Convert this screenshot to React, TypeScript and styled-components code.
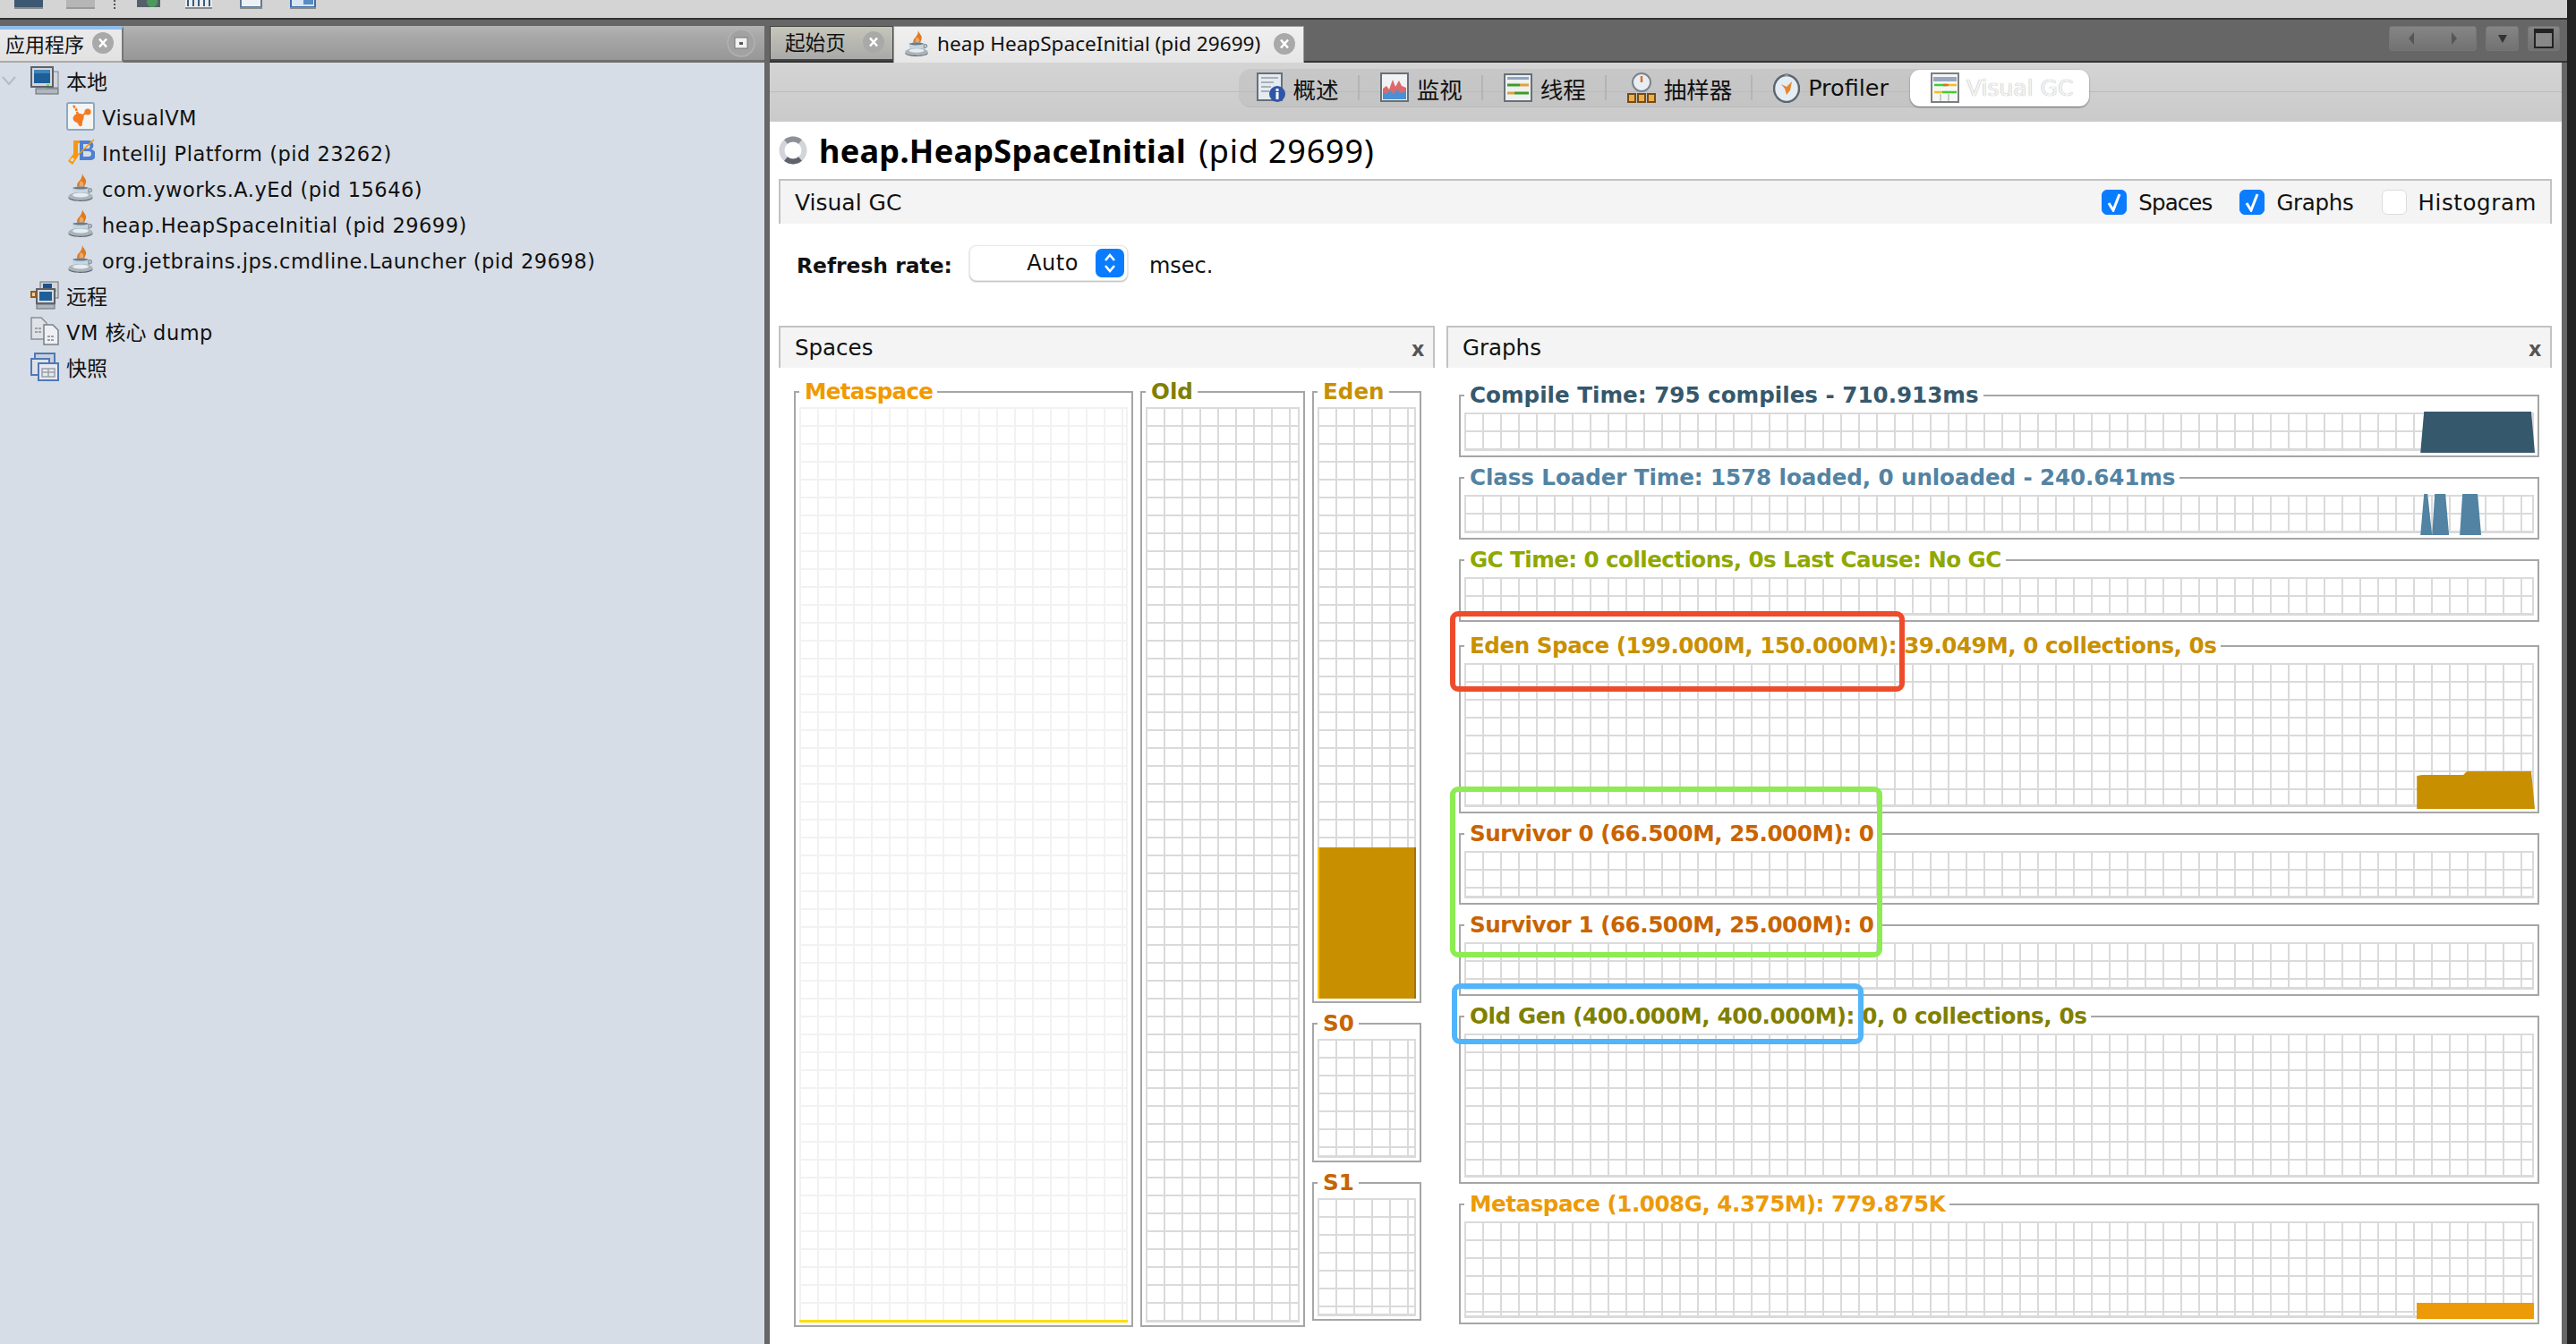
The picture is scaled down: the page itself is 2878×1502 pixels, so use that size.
import React from "react";
import styled, { createGlobalStyle } from "styled-components";

const SANS = `"DejaVu Sans", "Noto Sans CJK SC", sans-serif`;
const NOTO = `"Noto Sans", "Noto Sans CJK SC", sans-serif`;

const Global = createGlobalStyle`
  html, body { margin: 0; padding: 0; background: #222; }
  * { box-sizing: border-box; }
  body { font-family: ${SANS}; color: #111; overflow: hidden; }
`;

const Frame = styled.div`
  position: relative;
  width: 2878px;
  height: 1502px;
  overflow: hidden;
  background: #222;
`;
const Windowed = styled.div`
  width: 2868px;
  height: 1502px;
  display: flex;
  flex-direction: column;
  background: #666;
`;
const TopBar = styled.div`
  height: 20px;
  flex: none;
  background: #d4d4d4;
  display: flex;
  align-items: flex-start;
  overflow: hidden;
`;
const TopIcon = styled.svg<{ $ml: number }>`
  display: block;
  height: 10px;
  margin-left: ${(p) => p.$ml}px;
`;
const Main = styled.div`
  flex: 1;
  min-height: 0;
  display: flex;
  border-top: 2px solid #333;
  background: #666;
`;
const LeftPane = styled.aside`
  width: 854px;
  flex: none;
  margin-right: 6px;
  display: flex;
  flex-direction: column;
  padding-top: 7px;
`;
const LeftHead = styled.div`
  height: 41px;
  flex: none;
  display: flex;
  border-bottom: 3px solid #6e6e6e;
  background: linear-gradient(#b4b4b4, #a8a8a8 30%, #979797);
`;
const LeftTab = styled.div`
  width: 138px;
  height: 41px;
  flex: none;
  display: flex;
  align-items: center;
  padding: 0 0 5px 6px;
  gap: 9px;
  font-family: ${NOTO};
  font-size: 22px;
  background: linear-gradient(#eaeaea, #e2e2e2);
  border-top: 4px solid #8fbce8;
  border-right: 2px solid #777;
  border-bottom: 2px solid #aaa;
  white-space: nowrap;
  svg { flex: none; }
`;
const LeftHeadAction = styled.svg`
  margin-left: auto;
  margin-right: 10px;
  align-self: center;
  flex: none;
`;
const Tree = styled.div`
  flex: 1;
  background: #d6dde6;
`;
const TreeRow = styled.div<{ $indent: number }>`
  height: 40px;
  display: flex;
  align-items: center;
  padding-left: ${(p) => p.$indent}px;
  gap: 8px;
  font-size: 22.5px;
  letter-spacing: 0.5px;
  color: #111;
  white-space: nowrap;
  svg { flex: none; }
`;
const TreeText = styled.span`
  padding-top: 3px;
`;
const Han = styled.span`
  font-size: 23px;
  letter-spacing: 0;
`;
const TreeChevron = styled.svg`
  margin-right: 8px;
`;

const RightPane = styled.section`
  flex: 1;
  min-width: 0;
  display: flex;
  flex-direction: column;
  padding-top: 7px;
`;
const TabStrip = styled.div`
  height: 41px;
  flex: none;
  display: flex;
  align-items: flex-start;
  padding-right: 8px;
  border-bottom: 2px solid #333;
`;
const DocTab = styled.div<{ $active?: boolean; $w: number }>`
  width: ${(p) => p.$w}px;
  height: ${(p) => (p.$active ? 41 : 39)}px;
  flex: none;
  display: flex;
  align-items: center;
  font-family: ${NOTO};
  font-size: 22.6px;
  padding: 0 9px 3px ${(p) => (p.$active ? 10 : 16)}px;
  gap: 8px;
  white-space: nowrap;
  position: relative;
  z-index: 1;
  background: ${(p) => (p.$active ? "linear-gradient(#f0f0f0,#e6e6e6)" : "linear-gradient(#c6c6ba,#a9a9a9)")};
  border: 1px solid ${(p) => (p.$active ? "#9a9a9a" : "#444")};
  border-bottom: ${(p) => (p.$active ? "none" : "2px solid #444")};
  svg { flex: none; }
`;
const TabLabel = styled.span`
  flex: 1;
`;
const NavGroup = styled.div`
  margin-left: auto;
  display: flex;
  gap: 10px;
`;
const NavBtn = styled.div<{ $w: number }>`
  width: ${(p) => p.$w}px;
  height: 28px;
  display: flex;
  border: 1px solid #767676;
  border-radius: 3px;
  background: linear-gradient(#858585, #727272);
  align-items: center;
  justify-content: space-around;
`;
const Tri = styled.span<{ $dir: "l" | "r" | "d" }>`
  width: 0;
  height: 0;
  ${(p) =>
    p.$dir === "l"
      ? "border-top:7px solid transparent;border-bottom:7px solid transparent;border-right:6px solid #565656;"
      : p.$dir === "r"
      ? "border-top:7px solid transparent;border-bottom:7px solid transparent;border-left:6px solid #565656;"
      : "border-left:5px solid transparent;border-right:5px solid transparent;border-top:9px solid #333;"}
`;
const MaxGlyph = styled.span`
  width: 22px;
  height: 22px;
  background: #888;
  border: 2px solid #222;
  border-top-width: 5px;
`;
const WhiteCol = styled.div`
  flex: 1;
  min-height: 0;
  margin-right: 6px;
  display: flex;
  flex-direction: column;
  background: #fff;
`;
const SubBar = styled.div`
  height: 66px;
  flex: none;
  display: flex;
  justify-content: center;
  align-items: flex-start;
  padding-top: 7px;
  position: relative;
  background: linear-gradient(#d4d4d4, #cacaca);
  &::before {
    content: "";
    position: absolute;
    left: 0;
    right: 0;
    top: 32px;
    height: 1px;
    background: #bdbdbd;
  }
`;
const Pill = styled.div`
  position: relative;
  height: 43px;
  margin-right: 4px;
  display: flex;
  align-items: center;
  padding-left: 20px;
  border-radius: 14px;
  background: rgba(190, 190, 190, 0.55);
  border-bottom: 1px solid #b8b8b8;
`;
const PillItem = styled.div`
  display: flex;
  align-items: center;
  gap: 9px;
  font-size: 25.5px;
  color: #111;
  white-space: nowrap;
  padding-right: 21px;
  svg { flex: none; }
`;
const PillSep = styled.span`
  width: 2px;
  height: 28px;
  margin-right: 23px;
  background: #b4b4b4;
`;
const PillActive = styled.div`
  display: flex;
  align-items: center;
  gap: 8px;
  margin-left: 3px;
  padding: 0 18px 0 23px;
  height: 41px;
  border-radius: 11px;
  background: #fff;
  box-shadow: 0 1px 2px rgba(0, 0, 0, 0.45);
  font-size: 25px;
  color: #f4f4f4;
  text-shadow: 0 0 1px #8a8a8a;
  white-space: nowrap;
`;
const Content = styled.div`
  flex: 1;
  min-height: 0;
  padding: 0 11px 0 10px;
  display: flex;
  flex-direction: column;
`;
const TitleRow = styled.div`
  height: 64px;
  flex: none;
  display: flex;
  align-items: center;
  gap: 13px;
`;
const Title = styled.h1`
  margin: 0;
  font-family: ${NOTO};
  font-size: 36px;
  font-weight: 700;
  letter-spacing: 0.3px;
  color: #000;
  white-space: nowrap;
`;
const TitleLight = styled.span`
  font-weight: 400;
  letter-spacing: 0.8px;
  margin-left: 4px;
`;
const SectionBar = styled.div`
  height: 50px;
  flex: none;
  display: flex;
  align-items: center;
  padding: 0 15px 0 16px;
  font-size: 25px;
  background: #f4f4f4;
  border: 2px solid #c2c2c2;
  border-bottom: none;
`;
const Checks = styled.div`
  margin-left: auto;
  display: flex;
  align-items: center;
`;
const CheckLabel = styled.label<{ $ls: number }>`
  display: flex;
  align-items: center;
  gap: 13px;
  margin-left: 31px;
  font-size: 24.5px;
  letter-spacing: ${(p) => p.$ls}px;
  white-space: nowrap;
`;
const CheckBox = styled.span<{ $on: boolean }>`
  width: 28px;
  height: 28px;
  border-radius: 6px;
  display: flex;
  align-items: center;
  justify-content: center;
  background: ${(p) => (p.$on ? "#0a7cff" : "#fff")};
  border: 1px solid ${(p) => (p.$on ? "#0a7cff" : "#dcdcdc")};
`;
const RefreshRow = styled.div`
  height: 114px;
  flex: none;
  display: flex;
  align-items: flex-start;
  padding: 24px 0 0 20px;
`;
const RefreshLabel = styled.span`
  font-size: 23.4px;
  font-weight: 700;
  line-height: 46px;
  margin-right: 19px;
`;
const Select = styled.div`
  width: 177px;
  height: 40px;
  display: flex;
  align-items: center;
  justify-content: flex-end;
  gap: 19px;
  padding-right: 3px;
  border-radius: 8px;
  background: #fff;
  border: 1px solid #e8e8e8;
  box-shadow: 0 1px 2px rgba(0, 0, 0, 0.3);
  font-size: 24px;
  letter-spacing: 0.5px;
`;
const Stepper = styled.span`
  width: 32px;
  height: 32px;
  border-radius: 7px;
  background: #0a7cff;
  display: flex;
  align-items: center;
  justify-content: center;
`;
const Unit = styled.span`
  font-size: 24px;
  line-height: 46px;
  margin-left: 24px;
`;
const Panels = styled.div`
  flex: 1;
  min-height: 0;
  display: flex;
  gap: 13px;
`;
const Panel = styled.div<{ $w: number }>`
  width: ${(p) => p.$w}px;
  flex: none;
  display: flex;
  flex-direction: column;
`;
const PanelHead = styled.div`
  height: 47px;
  flex: none;
  display: flex;
  align-items: center;
  justify-content: space-between;
  padding: 0 10px 0 16px;
  font-size: 24.5px;
  background: #f4f4f4;
  border: 2px solid #c2c2c2;
  border-bottom: none;
`;
const CloseX = styled.span`
  font-family: ${NOTO};
  font-size: 24px;
  font-weight: 700;
  color: #555;
`;
const SpacesBody = styled.div`
  display: flex;
  gap: 8px;
  padding: 12px 0 0 17px;
`;
const SpaceStack = styled.div`
  display: flex;
  flex-direction: column;
  gap: 8px;
  width: 122px;
`;
const GraphsBody = styled.div`
  display: flex;
  flex-direction: column;
  padding: 16px 0 0 14px;
  width: 1221px;
`;
const Box = styled.fieldset<{ $w?: number; $gap?: number; $pad?: number }>`
  margin: ${(p) => p.$gap ?? 0}px 0 0 0;
  min-width: 0;
  width: ${(p) => (p.$w ? `${p.$w}px` : "100%")};
  flex: none;
  border: 2px solid #a6a6a6;
  padding: ${(p) => (p.$pad === 3 ? "2px 4px 3px" : "4px 4px 5px")};
`;
const Legend = styled.legend<{ $c: string; $ls?: number }>`
  padding: 0 5px 0 6px;
  height: 30px;
  line-height: 30px;
  font-size: 24.6px;
  font-weight: 700;
  letter-spacing: ${(p) => p.$ls ?? 0}px;
  color: ${(p) => p.$c};
  white-space: nowrap;
`;
const ChartGrid = styled.div<{ $h: number; $soft?: boolean }>`
  position: relative;
  height: ${(p) => p.$h}px;
  ${(p) => {
    const c = p.$soft ? "#f2f2f2" : "#dadada";
    return `
      background-color: #fff;
      background-image: linear-gradient(${c} 2px, transparent 2px), linear-gradient(90deg, ${c} 2px, transparent 2px);
      background-size: 20px 20px;
      border-right: 2px solid ${c};
      border-bottom: 3px solid ${c};
    `;
  }}
`;
const Plot = styled.svg`
  position: absolute;
  left: 0;
  bottom: -5px;
  width: 100%;
  display: block;
  overflow: visible;
`;
const Level = styled.div<{ $c: string; $h: number; $left?: number; $bottom?: number }>`
  position: absolute;
  left: ${(p) => p.$left ?? 0}px;
  right: -2px;
  bottom: ${(p) => p.$bottom ?? -3}px;
  height: ${(p) => p.$h}px;
  background: ${(p) => p.$c};
`;
const EdenLevel = styled(Level)`
  border-left: 2px solid #ffc400;
  border-right: 2px solid #a07400;
`;
const Callout = styled.div<{ $c: string; $x: number; $y: number; $w: number; $h: number }>`
  position: absolute;
  left: ${(p) => p.$x}px;
  top: ${(p) => p.$y}px;
  width: ${(p) => p.$w}px;
  height: ${(p) => p.$h}px;
  border: 6px solid ${(p) => p.$c};
  border-radius: 9px;
  pointer-events: none;
`;

const CloseDot = () => (
  <svg width="24" height="24" viewBox="0 0 24 24">
    <circle cx="12" cy="12" r="12" fill="#a9a9a9" />
    <path d="M8 7.5l8 9M16 7.5l-8 9" stroke="#fff" strokeWidth="2.6" />
  </svg>
);
const ComputerIcon = () => (
  <svg width="32" height="32" viewBox="0 0 32 32">
    <rect x="19" y="6" width="12" height="18" fill="#d2d6dc" stroke="#7c8188" />
    <rect x="1" y="1" width="24" height="22" fill="#d4d8de" stroke="#5c6268" strokeWidth="2" />
    <rect x="4" y="4" width="18" height="15" fill="#1d5f99" />
    <rect x="4" y="4" width="18" height="4" fill="#3f84b8" />
    <rect x="18" y="20" width="3" height="2" fill="#6fe04c" />
    <rect x="6" y="25" width="25" height="6" fill="#b0b6bd" stroke="#666c72" />
  </svg>
);
const VisualVMIcon = () => (
  <svg width="32" height="32" viewBox="0 0 32 32">
    <rect x="1" y="1" width="30" height="30" rx="2" fill="#f3f4f4" stroke="#8ea8bf" strokeWidth="2" />
    <path d="M9 15c3-3 8-3 10 0 2 3-1 5-1 8 0 3-1 5-3 4-2-1-1-3-3-4-4-1-6-5-3-8z" fill="#f47a20" />
    <circle cx="24" cy="11" r="3.6" fill="#f47a20" />
    <path d="M16 17l7-6" stroke="#f47a20" strokeWidth="2" />
    <path d="M8 4l3 4 2 6" fill="none" stroke="#f47a20" strokeWidth="2.5" strokeDasharray="3 1" />
  </svg>
);
const IntellijIcon = () => (
  <svg width="32" height="32" viewBox="0 0 32 32">
    <path
      fillRule="evenodd"
      d="M15 3h10a5.5 5.5 0 0 1 3 10 6 6 0 0 1-2 12H15zM19 7v5h5a2.5 2.5 0 0 0 0-5zM19 15v6h6a3 3 0 0 0 0-6z"
      fill="#4f7fd0"
    />
    <path d="M8 3h7v3h-2v15l-6 9-5-4 6-8V6H8z" fill="#f6980f" />
    <path d="M4 25l3 2 2-3-2-2z" fill="#d6dde6" />
    <path d="M10 22L31 2" stroke="#f6980f" strokeWidth="1.6" />
  </svg>
);
const JavaIcon = ({ size = 32 }: { size?: number }) => (
  <svg width={size} height={size} viewBox="0 0 32 32">
    <path d="M18 0c1 4 5 6 4 10-1 3-2 5-3 7h-5c-3-3-2-6 0-8 2-2 4-5 4-9z" fill="#dd7a22" />
    <path d="M16 8c-1 2-2 4-1 7h3c2-2 2-4 0-6z" fill="#f3a65c" />
    <path d="M7 16c4-2 14-2 18 0l-1 7c-1 3-15 3-16 0z" fill="#c4d6e2" />
    <path d="M7 16c4 2 14 2 18 0-4-2-14-2-18 0z" fill="#6e7a84" />
    <path d="M25 17c4-1 5 3 0 4z" fill="none" stroke="#8c98a2" strokeWidth="1.5" />
    <ellipse cx="16" cy="25.5" rx="13.5" ry="4.5" fill="#aab4bc" />
    <ellipse cx="16" cy="24" rx="9" ry="2.4" fill="#e6ecf0" />
    <path d="M2.5 26c2 5 25 5 27 0v1.5c-2 4.500-25 4.500-27 0z" fill="#5c6368" />
  </svg>
);
const RemoteIcon = () => (
  <svg width="32" height="32" viewBox="0 0 32 32">
    <rect x="11" y="1" width="20" height="18" fill="#d0d4da" stroke="#6a7076" />
    <rect x="14" y="3" width="10" height="6" fill="#1d4f8f" />
    <rect x="26" y="9" width="3" height="3" fill="#6fe04c" />
    <rect x="7" y="9" width="20" height="16" fill="#d4d8de" stroke="#5c6268" strokeWidth="2" />
    <rect x="10" y="12" width="14" height="10" fill="#1d5f99" />
    <rect x="7" y="26" width="20" height="5" fill="#b0b6bd" stroke="#666c72" />
    <rect x="1" y="12" width="5" height="6" fill="#e0d0b8" stroke="#9a5b10" strokeWidth="2" />
  </svg>
);
const DumpIcon = () => (
  <svg width="32" height="32" viewBox="0 0 32 32">
    <path d="M1 1h11l6 6v18H1z" fill="#dfe3e8" stroke="#8b9096" strokeWidth="1.5" />
    <path d="M15 9h10l6 6v16H15z" fill="#eef0f3" stroke="#7b8086" strokeWidth="1.5" />
    <path d="M5 13h8M5 17h8M19 22h8M19 26h8" stroke="#9ca1a8" strokeWidth="2" strokeDasharray="3 1" />
  </svg>
);
const SnapshotIcon = () => (
  <svg width="32" height="32" viewBox="0 0 32 32">
    <rect x="5" y="1" width="22" height="20" fill="#c8d0da" stroke="#4f78b8" strokeWidth="2" />
    <rect x="1" y="7" width="20" height="18" fill="#dde2e8" stroke="#4f78b8" strokeWidth="2" />
    <rect x="9" y="12" width="22" height="19" fill="#e6e9ee" stroke="#4f78b8" strokeWidth="2" />
    <path d="M13 18h14v9H13zM20 18v9M13 22h14" fill="none" stroke="#9aa0a8" strokeWidth="1.5" />
  </svg>
);
const OverviewIcon = () => (
  <svg width="32" height="34" viewBox="0 0 32 34">
    <rect x="1" y="1" width="27" height="30" fill="#e6ebf1" stroke="#66707a" strokeWidth="2" />
    <path d="M5 6h19M5 11h14M5 16h11M5 21h9" stroke="#a8b0ba" strokeWidth="2" />
    <circle cx="23" cy="24" r="9" fill="#2f55a8" />
    <rect x="21.5" y="22" width="3" height="8" fill="#fff" />
    <rect x="21.5" y="18" width="3" height="3" fill="#fff" />
  </svg>
);
const MonitorIcon = () => (
  <svg width="32" height="34" viewBox="0 0 32 34">
    <rect x="1" y="1" width="30" height="31" fill="#f0f2f4" stroke="#66707a" strokeWidth="2" />
    <path d="M3 30V18l4-3 3 4 4-11 3 8 4-7 3 6 5 2v13z" fill="#dc6a6a" />
    <path d="M3 30v-8l4 2 4-4 4 4 4-5 4 4 6-2v9z" fill="#4a90d4" />
  </svg>
);
const ThreadsIcon = () => (
  <svg width="32" height="32" viewBox="0 0 32 32">
    <rect x="1" y="1" width="30" height="30" fill="#eef1ee" stroke="#66707a" strokeWidth="2" />
    <rect x="4" y="4" width="24" height="3" fill="#8ea6c4" />
    <path d="M4 13h14" stroke="#3f9a2c" strokeWidth="3" />
    <path d="M18 13h10" stroke="#e0a040" strokeWidth="3" />
    <path d="M4 22h8" stroke="#e0a040" strokeWidth="3" />
    <path d="M12 22h16" stroke="#3f9a2c" strokeWidth="3" />
  </svg>
);
const SamplerIcon = () => (
  <svg width="32" height="34" viewBox="0 0 32 34">
    <circle cx="16" cy="11" r="10" fill="#e8eef4" stroke="#7b848c" strokeWidth="2" />
    <path d="M16 4v7" stroke="#d8702a" strokeWidth="2.5" />
    <path d="M1 24h8v9H1zM12 24h8v9h-8zM23 24h8v9h-8z" fill="#eab04a" stroke="#7a4a10" strokeWidth="2" />
  </svg>
);
const ProfilerIcon = () => (
  <svg width="30" height="34" viewBox="0 0 30 34">
    <ellipse cx="15" cy="18" rx="14" ry="15" fill="#e4ecf4" stroke="#5d666e" strokeWidth="2.5" />
    <path d="M9 13l6 3 6-6-2 10-4 5-2-7z" fill="#e8862c" />
    <rect x="13" y="1" width="4" height="3" fill="#8a9098" />
  </svg>
);
const VisualGCIcon = () => (
  <svg width="32" height="34" viewBox="0 0 32 34">
    <rect x="1" y="1" width="30" height="32" fill="#f6f6f6" stroke="#7a7f85" strokeWidth="2" />
    <rect x="3" y="5" width="26" height="5" fill="#9aa8c0" />
    <path d="M4 14h14" stroke="#3fcf2a" strokeWidth="2.5" />
    <path d="M14 14h6" stroke="#e0702a" strokeWidth="2.5" />
    <path d="M20 14h9" stroke="#f0c020" strokeWidth="2.5" />
    <path d="M4 22h9" stroke="#f0c020" strokeWidth="2.5" />
    <path d="M13 22h16" stroke="#3fcf2a" strokeWidth="2.5" />
    <path d="M11 24v8M20 24v8" stroke="#ccc" strokeWidth="2" />
  </svg>
);
const Spinner = () => (
  <svg width="32" height="32" viewBox="0 0 32 32">
    <circle cx="16" cy="16" r="12.5" fill="none" stroke="#d2d4da" strokeWidth="6" />
    <path d="M8 6.500A12.5 12.500 0 0 1 24 6.500" fill="none" stroke="#8d9098" strokeWidth="6" />
    <path d="M24 25.500A12.5 12.500 0 0 1 8 25.500" fill="none" stroke="#5f626a" strokeWidth="6" />
  </svg>
);
const Tick = () => (
  <svg width="18" height="22" viewBox="0 0 18 22">
    <path d="M3 12l5 8 7-18" fill="none" stroke="#fff" strokeWidth="3" />
  </svg>
);
const StepGlyph = () => (
  <svg width="16" height="26" viewBox="0 0 16 26">
    <path d="M3 10l5-6 5 6M3 16l5 6 5-6" fill="none" stroke="#fff" strokeWidth="2.5" />
  </svg>
);

const Labelled = ({ icon, text }: { icon: React.ReactNode; text: string }) => (
  <PillItem>
    {icon}
    {text}
  </PillItem>
);

interface GraphSpec {
  label: string;
  color: string;
  h: number;
  gap: number;
  ls?: number;
  plot?: React.ReactNode;
}

const COMPILE_PLOT = (
  <Plot height="46" viewBox="0 0 1195 46" preserveAspectRatio="none">
    <path d="M1070 46L1074 0H1194L1198 46z" fill="#35586c" />
  </Plot>
);
const LOADER_PLOT = (
  <Plot height="46" viewBox="0 0 1195 46" preserveAspectRatio="none">
    <path d="M1070 46L1074 0H1078L1083 46zM1083 46L1086 0H1098L1102 46zM1114 46L1117 0H1134L1138 46z" fill="#5383a3" />
  </Plot>
);
const EDEN_PLOT = (
  <Plot height="42" viewBox="0 0 1195 42" preserveAspectRatio="none">
    <path d="M1066 42V5L1072 4H1118L1122 0H1194L1198 42z" fill="#c89000" />
  </Plot>
);

const GRAPHS: GraphSpec[] = [
  { label: "Compile Time: 795 compiles - 710.913ms", color: "#35586c", h: 43, gap: 0, plot: COMPILE_PLOT },
  { label: "Class Loader Time: 1578 loaded, 0 unloaded - 240.641ms", color: "#5383a3", h: 43, gap: 8, ls: -0.1, plot: LOADER_PLOT },
  { label: "GC Time: 0 collections, 0s Last Cause: No GC", color: "#8fa800", h: 43, gap: 8, ls: -0.57 },
  { label: "Eden Space (199.000M, 150.000M): 39.049M, 0 collections, 0s", color: "#c89000", h: 161, gap: 12, ls: -0.47, plot: EDEN_PLOT },
  { label: "Survivor 0 (66.500M, 25.000M): 0", color: "#c86400", h: 53, gap: 8, ls: -0.45 },
  { label: "Survivor 1 (66.500M, 25.000M): 0", color: "#c86400", h: 53, gap: 8, ls: -0.45 },
  { label: "Old Gen (400.000M, 400.000M): 0, 0 collections, 0s", color: "#808000", h: 161, gap: 8, ls: -0.4 },
  { label: "Metaspace (1.008G, 4.375M): 779.875K", color: "#ec9a08", h: 108, gap: 8, ls: -0.47, plot: <Level $c="#ec9a08" $h={18} $left={1064} $bottom={-4} /> },
];

export default function App() {
  return (
    <Frame>
      <Global />
      <Windowed>
        <TopBar>
          <TopIcon $ml={16} width="32" viewBox="0 0 32 10">
            <rect width="32" height="8" fill="#3d5872" />
            <rect y="8" width="32" height="2" fill="#8a8a8a" />
          </TopIcon>
          <TopIcon $ml={26} width="32" viewBox="0 0 32 10">
            <rect width="32" height="8" fill="#b6b6b6" />
            <rect y="8" width="32" height="2" fill="#9a9a9a" />
          </TopIcon>
          <TopIcon $ml={21} width="2" viewBox="0 0 2 10">
            <path d="M1 0v10" stroke="#555" strokeWidth="2" strokeDasharray="2 2" />
          </TopIcon>
          <TopIcon $ml={24} width="26" viewBox="0 0 26 10">
            <rect width="26" height="8" fill="#55606a" />
            <circle cx="17" cy="2" r="6" fill="#4c9a5a" />
          </TopIcon>
          <TopIcon $ml={28} width="30" viewBox="0 0 30 10">
            <rect width="30" height="8" fill="#e8ecf0" />
            <path d="M3 0v7M9 0v7M15 0v7M21 0v7M27 0v7" stroke="#3b5a7a" strokeWidth="2" />
            <rect y="8" width="30" height="2" fill="#8a8a8a" />
          </TopIcon>
          <TopIcon $ml={31} width="25" viewBox="0 0 25 10">
            <rect x="1" y="-3" width="23" height="11" fill="#eef1f4" stroke="#5d7a96" strokeWidth="2" />
            <rect y="8" width="25" height="2" fill="#8a8a8a" />
          </TopIcon>
          <TopIcon $ml={31} width="29" viewBox="0 0 29 10">
            <rect x="1" y="-3" width="27" height="11" fill="#d8e6f4" stroke="#3f6ea8" strokeWidth="2" />
            <rect x="15" y="-1" width="11" height="6" fill="#5a8cc4" />
            <rect y="8" width="29" height="2" fill="#8a8a8a" />
          </TopIcon>
        </TopBar>
        <Main>
          <LeftPane>
            <LeftHead>
              <LeftTab>
                应用程序
                <CloseDot />
              </LeftTab>
              <LeftHeadAction width="32" height="32" viewBox="0 0 32 32">
                <circle cx="16" cy="16" r="15" fill="#a2a2a2" stroke="#b2b2b2" strokeWidth="1.5" />
                <rect x="9" y="10" width="14" height="12" fill="#f0f0f0" stroke="#777" />
                <rect x="14" y="15" width="4" height="3" fill="#555" />
              </LeftHeadAction>
            </LeftHead>
            <Tree>
              <TreeRow $indent={2}>
                <TreeChevron width="16" height="12" viewBox="0 0 16 12">
                  <path d="M1 2l7 8 7-8" fill="none" stroke="#b4bcc6" strokeWidth="2" />
                </TreeChevron>
                <ComputerIcon />
                <Han>本地</Han>
              </TreeRow>
              <TreeRow $indent={74}>
                <VisualVMIcon />
                <TreeText>VisualVM</TreeText>
              </TreeRow>
              <TreeRow $indent={74}>
                <IntellijIcon />
                <TreeText>IntelliJ Platform (pid 23262)</TreeText>
              </TreeRow>
              <TreeRow $indent={74}>
                <JavaIcon />
                <TreeText>com.yworks.A.yEd (pid 15646)</TreeText>
              </TreeRow>
              <TreeRow $indent={74}>
                <JavaIcon />
                <TreeText>heap.HeapSpaceInitial (pid 29699)</TreeText>
              </TreeRow>
              <TreeRow $indent={74}>
                <JavaIcon />
                <TreeText>org.jetbrains.jps.cmdline.Launcher (pid 29698)</TreeText>
              </TreeRow>
              <TreeRow $indent={34}>
                <RemoteIcon />
                <Han>远程</Han>
              </TreeRow>
              <TreeRow $indent={34}>
                <DumpIcon />
                <span>
                  VM <Han>核心</Han> dump
                </span>
              </TreeRow>
              <TreeRow $indent={34}>
                <SnapshotIcon />
                <Han>快照</Han>
              </TreeRow>
            </Tree>
          </LeftPane>
          <RightPane>
            <TabStrip>
              <DocTab $w={138}>
                <TabLabel>起始页</TabLabel>
                <CloseDot />
              </DocTab>
              <DocTab $active $w={459}>
                <JavaIcon size={30} />
                <TabLabel>heap HeapSpaceInitial (pid 29699)</TabLabel>
                <CloseDot />
              </DocTab>
              <NavGroup>
                <NavBtn $w={98}>
                  <Tri $dir="l" />
                  <Tri $dir="r" />
                </NavBtn>
                <NavBtn $w={37}>
                  <Tri $dir="d" />
                </NavBtn>
                <NavBtn $w={36}>
                  <MaxGlyph />
                </NavBtn>
              </NavGroup>
            </TabStrip>
            <WhiteCol>
              <SubBar>
                <Pill>
                  <Labelled icon={<OverviewIcon />} text="概述" />
                  <PillSep />
                  <Labelled icon={<MonitorIcon />} text="监视" />
                  <PillSep />
                  <Labelled icon={<ThreadsIcon />} text="线程" />
                  <PillSep />
                  <Labelled icon={<SamplerIcon />} text="抽样器" />
                  <PillSep />
                  <Labelled icon={<ProfilerIcon />} text="Profiler" />
                  <PillActive>
                    <VisualGCIcon />
                    Visual GC
                  </PillActive>
                </Pill>
              </SubBar>
              <Content>
                <TitleRow>
                  <Spinner />
                  <Title>
                    heap.HeapSpaceInitial<TitleLight> (pid 29699)</TitleLight>
                  </Title>
                </TitleRow>
                <SectionBar>
                  Visual GC
                  <Checks>
                    <CheckLabel $ls={-0.9}>
                      <CheckBox $on>
                        <Tick />
                      </CheckBox>
                      Spaces
                    </CheckLabel>
                    <CheckLabel $ls={-0.3}>
                      <CheckBox $on>
                        <Tick />
                      </CheckBox>
                      Graphs
                    </CheckLabel>
                    <CheckLabel $ls={0.6}>
                      <CheckBox $on={false} />
                      Histogram
                    </CheckLabel>
                  </Checks>
                </SectionBar>
                <RefreshRow>
                  <RefreshLabel>Refresh rate:</RefreshLabel>
                  <Select>
                    Auto
                    <Stepper>
                      <StepGlyph />
                    </Stepper>
                  </Select>
                  <Unit>msec.</Unit>
                </RefreshRow>
                <Panels>
                  <Panel $w={733}>
                    <PanelHead>
                      Spaces
                      <CloseX>x</CloseX>
                    </PanelHead>
                    <SpacesBody>
                      <Box $w={379} $pad={3}>
                        <Legend $c="#f09a00" $ls={-0.7}>
                          Metaspace
                        </Legend>
                        <ChartGrid $h={1023} $soft>
                          <Level $c="#ffdd00" $h={3} />
                        </ChartGrid>
                      </Box>
                      <Box $w={184} $pad={3}>
                        <Legend $c="#808000">Old</Legend>
                        <ChartGrid $h={1023} />
                      </Box>
                      <SpaceStack>
                        <Box $pad={3}>
                          <Legend $c="#c89000">Eden</Legend>
                          <ChartGrid $h={661}>
                            <EdenLevel $c="#c89000" $h={169} />
                          </ChartGrid>
                        </Box>
                        <Box $pad={3}>
                          <Legend $c="#c86400">S0</Legend>
                          <ChartGrid $h={133} />
                        </Box>
                        <Box $pad={3}>
                          <Legend $c="#c86400">S1</Legend>
                          <ChartGrid $h={132} />
                        </Box>
                      </SpaceStack>
                    </SpacesBody>
                  </Panel>
                  <Panel $w={1235}>
                    <PanelHead>
                      Graphs
                      <CloseX>x</CloseX>
                    </PanelHead>
                    <GraphsBody>
                      {GRAPHS.map((g) => (
                        <Box key={g.label} $gap={g.gap}>
                          <Legend $c={g.color} $ls={g.ls}>
                            {g.label}
                          </Legend>
                          <ChartGrid $h={g.h}>{g.plot}</ChartGrid>
                        </Box>
                      ))}
                    </GraphsBody>
                  </Panel>
                </Panels>
              </Content>
            </WhiteCol>
          </RightPane>
        </Main>
      </Windowed>
      <Callout $c="#ee4b2b" $x={1620} $y={683} $w={508} $h={90} />
      <Callout $c="#8cec52" $x={1620} $y={879} $w={483} $h={191} />
      <Callout $c="#52b4fa" $x={1622} $y={1099} $w={460} $h={68} />
    </Frame>
  );
}
